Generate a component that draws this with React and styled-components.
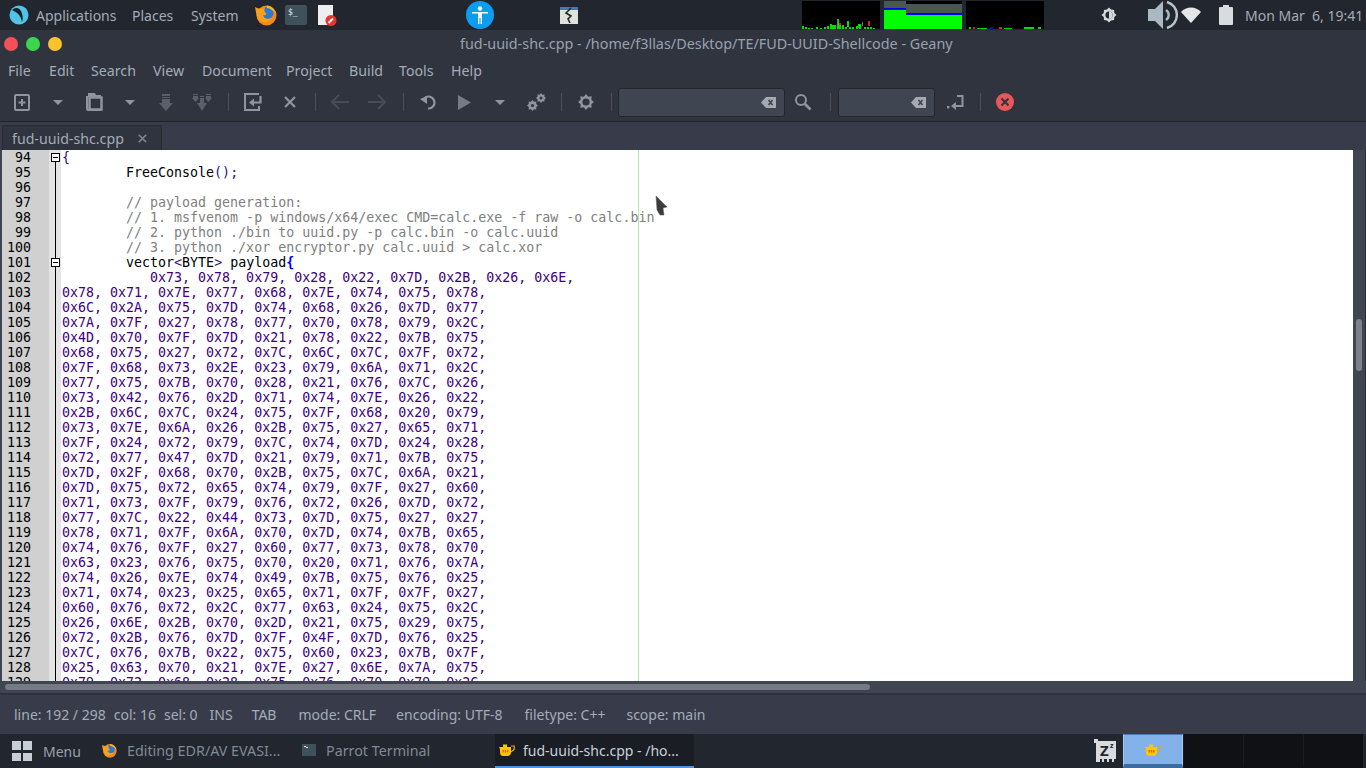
import React from "react";
import styled, { createGlobalStyle } from "styled-components";

const uiFont = `"Noto Sans", "Open Sans", sans-serif`;
const monoFont = `"DejaVu Sans Mono", "Liberation Mono", monospace`;

const payload = [
  "0x73, 0x78, 0x79, 0x28, 0x22, 0x7D, 0x2B, 0x26, 0x6E,",
  "0x78, 0x71, 0x7E, 0x77, 0x68, 0x7E, 0x74, 0x75, 0x78,",
  "0x6C, 0x2A, 0x75, 0x7D, 0x74, 0x68, 0x26, 0x7D, 0x77,",
  "0x7A, 0x7F, 0x27, 0x78, 0x77, 0x70, 0x78, 0x79, 0x2C,",
  "0x4D, 0x70, 0x7F, 0x7D, 0x21, 0x78, 0x22, 0x7B, 0x75,",
  "0x68, 0x75, 0x27, 0x72, 0x7C, 0x6C, 0x7C, 0x7F, 0x72,",
  "0x7F, 0x68, 0x73, 0x2E, 0x23, 0x79, 0x6A, 0x71, 0x2C,",
  "0x77, 0x75, 0x7B, 0x70, 0x28, 0x21, 0x76, 0x7C, 0x26,",
  "0x73, 0x42, 0x76, 0x2D, 0x71, 0x74, 0x7E, 0x26, 0x22,",
  "0x2B, 0x6C, 0x7C, 0x24, 0x75, 0x7F, 0x68, 0x20, 0x79,",
  "0x73, 0x7E, 0x6A, 0x26, 0x2B, 0x75, 0x27, 0x65, 0x71,",
  "0x7F, 0x24, 0x72, 0x79, 0x7C, 0x74, 0x7D, 0x24, 0x28,",
  "0x72, 0x77, 0x47, 0x7D, 0x21, 0x79, 0x71, 0x7B, 0x75,",
  "0x7D, 0x2F, 0x68, 0x70, 0x2B, 0x75, 0x7C, 0x6A, 0x21,",
  "0x7D, 0x75, 0x72, 0x65, 0x74, 0x79, 0x7F, 0x27, 0x60,",
  "0x71, 0x73, 0x7F, 0x79, 0x76, 0x72, 0x26, 0x7D, 0x72,",
  "0x77, 0x7C, 0x22, 0x44, 0x73, 0x7D, 0x75, 0x27, 0x27,",
  "0x78, 0x71, 0x7F, 0x6A, 0x70, 0x7D, 0x74, 0x7B, 0x65,",
  "0x74, 0x76, 0x7F, 0x27, 0x60, 0x77, 0x73, 0x78, 0x70,",
  "0x63, 0x23, 0x76, 0x75, 0x70, 0x20, 0x71, 0x76, 0x7A,",
  "0x74, 0x26, 0x7E, 0x74, 0x49, 0x7B, 0x75, 0x76, 0x25,",
  "0x71, 0x74, 0x23, 0x25, 0x65, 0x71, 0x7F, 0x7F, 0x27,",
  "0x60, 0x76, 0x72, 0x2C, 0x77, 0x63, 0x24, 0x75, 0x2C,",
  "0x26, 0x6E, 0x2B, 0x70, 0x2D, 0x21, 0x75, 0x29, 0x75,",
  "0x72, 0x2B, 0x76, 0x7D, 0x7F, 0x4F, 0x7D, 0x76, 0x25,",
  "0x7C, 0x76, 0x7B, 0x22, 0x75, 0x60, 0x23, 0x7B, 0x7F,",
  "0x25, 0x63, 0x70, 0x21, 0x7E, 0x27, 0x6E, 0x7A, 0x75,",
  "0x79, 0x72, 0x68, 0x28, 0x75, 0x76, 0x70, 0x79, 0x2C,",
];

const GlobalStyle = createGlobalStyle`
  html, body {
    margin: 0;
    padding: 0;
    width: 1366px;
    height: 768px;
    overflow: hidden;
    background: #2f343f;
    font-family: ${uiFont};
  }
`;

const Screen = styled.div`
  width: 1366px;
  height: 768px;
  display: flex;
  flex-direction: column;
  position: relative;
  overflow: hidden;
`;

const TopPanel = styled.div`
  height: 30px;
  flex: none;
  display: flex;
  align-items: center;
  background: #22262e;
  color: #a3acb8;
  font-size: 14px;
`;

const PanelSlot = styled.div`
  flex: none;
  display: flex;
  align-items: center;
  justify-content: center;
  width: ${(p) => p.$w}px;
  margin-left: ${(p) => p.$ml || 0}px;
`;

const PanelLabel = styled.span`
  flex: none;
  width: ${(p) => p.$w}px;
  white-space: nowrap;
`;

const Clock = styled.span`
  margin-left: 12px;
  white-space: pre;
  font-size: 14px;
  color: #a3acb8;
`;

const TitleBar = styled.div`
  height: 27px;
  flex: none;
  display: flex;
  align-items: center;
  position: relative;
  background: #2f343f;
  padding-left: 4px;
  gap: 8px;
`;

const Dot = styled.span`
  width: 14px;
  height: 14px;
  border-radius: 50%;
  background: ${(p) => p.$c};
`;

const Title = styled.div`
  flex: 1;
  margin-left: 390px;
  font-size: 14.38px;
  color: #98a2af;
  white-space: nowrap;
`;

const MenuBar = styled.div`
  height: 27px;
  flex: none;
  display: flex;
  align-items: center;
  background: #2f343f;
  color: #a3acb8;
  font-size: 14.2px;
  padding-left: 8px;
`;

const MenuItem = styled.span`
  flex: none;
  width: ${(p) => p.$w}px;
`;

const Toolbar = styled.div`
  height: 38px;
  flex: none;
  box-sizing: border-box;
  display: flex;
  align-items: center;
  background: #2f343f;
  border-bottom: 1px solid #1f2228;
  padding: 0 0 1px 4px;
`;

const ToolBtn = styled.div`
  width: ${(p) => p.$w || 36}px;
  height: 36px;
  flex: none;
  display: flex;
  align-items: center;
  justify-content: center;
`;

const ToolSep = styled.div`
  width: 1px;
  height: 18px;
  flex: none;
  background: #4b505c;
  margin: 0 ${(p) => p.$m}px 0 ${(p) => p.$ml}px;
`;

const SearchEntry = styled.div`
  width: ${(p) => p.$w}px;
  height: 29px;
  flex: none;
  box-sizing: border-box;
  display: flex;
  align-items: center;
  justify-content: flex-end;
  padding-right: 8px;
  background: #404552;
  border: 1px solid #23262d;
  border-radius: 3px;
`;

const TabBar = styled.div`
  height: 28px;
  flex: none;
  display: flex;
  align-items: flex-end;
  background: #383c4a;
  padding-left: 2px;
`;

const Tab = styled.div`
  width: 160px;
  height: 25px;
  box-sizing: border-box;
  display: flex;
  align-items: center;
  padding-left: 9px;
  gap: 14px;
  background: #2f343f;
  border: 1px solid #262a32;
  border-bottom: none;
  border-radius: 2px 2px 0 0;
  color: #a3acb8;
  font-size: 14.2px;
`;

const EditorRow = styled.div`
  height: 531px;
  flex: none;
  display: flex;
  background: #404552;
`;

const Editor = styled.div`
  flex: 1;
  position: relative;
  overflow: hidden;
  margin-left: 2px;
  background: #fff;
  font-family: ${monoFont};
  font-size: 13.3px;
`;

const Ruler = styled.div`
  position: absolute;
  left: 636px;
  top: 0;
  bottom: 0;
  width: 1px;
  background: #b8e8b0;
`;

const CodeRow = styled.div`
  height: 15px;
  line-height: 15px;
  display: flex;
`;

const LineNo = styled.div`
  width: 47px;
  flex: none;
  box-sizing: border-box;
  padding-right: 18px;
  text-align: right;
  background: #d0d0d0;
  color: #000;
`;

const FoldCell = styled.div`
  width: 12px;
  flex: none;
  position: relative;
  background: #e4e4e4;

  &::before {
    content: "";
    position: absolute;
    left: 6px;
    top: ${(p) => (p.$head ? 7 : 0)}px;
    bottom: 0;
    width: 1px;
    background: #000;
  }
`;

const FoldBox = styled.div`
  position: absolute;
  left: 2px;
  top: 3px;
  width: 9px;
  height: 9px;
  box-sizing: border-box;
  background: #fff;
  border: 1px solid #000;

  &::after {
    content: "";
    position: absolute;
    left: 1px;
    right: 1px;
    top: 3px;
    height: 1px;
    background: #000;
  }
`;

const CodeText = styled.div`
  padding-left: 1px;
  white-space: pre;
  color: #000;
`;

const Comment = styled.span`
  color: #808080;
`;

const Op = styled.span`
  color: #301080;
`;

const Brace = styled.span`
  color: ${(p) => (p.$hot ? "#0000ff" : "#301080")};
  font-weight: ${(p) => (p.$hot ? 700 : 400)};
`;

const Hex = styled.span`
  color: #400080;
`;

const VScroll = styled.div`
  width: 13px;
  flex: none;
  position: relative;
  background: #404552;
  border-right: 1px solid #2b2e38;
  box-sizing: border-box;
`;

const VThumb = styled.div`
  position: absolute;
  left: 3px;
  top: 169px;
  width: 6px;
  height: 52px;
  border-radius: 3px;
  background: #7d818c;
`;

const HScroll = styled.div`
  height: 14px;
  flex: none;
  box-sizing: border-box;
  padding: 3px 0 0 5px;
  background: #404552;
  border-bottom: 2px solid #2f323c;
`;

const HThumb = styled.div`
  width: 865px;
  height: 6px;
  border-radius: 3px;
  background: #767a85;
`;

const StatusBar = styled.div`
  height: 39px;
  flex: none;
  display: flex;
  align-items: center;
  background: #383c4a;
  color: #a3acb8;
  font-size: 14px;
  padding-left: 14px;
`;

const StatusItem = styled.span`
  margin-left: ${(p) => p.$ml || 0}px;
  white-space: nowrap;
`;

const Taskbar = styled.div`
  flex: 1;
  display: flex;
  align-items: stretch;
  background: #22262e;
  color: #7f8a96;
  font-size: 14px;
`;

const MenuButton = styled.div`
  display: flex;
  align-items: center;
  padding-left: 12px;
  gap: 11px;
  width: 102px;
  box-sizing: border-box;
  flex: none;
  color: #98a2af;
`;

const Task = styled.div`
  flex: none;
  width: ${(p) => p.$w}px;
  box-sizing: border-box;
  display: flex;
  align-items: center;
  gap: ${(p) => p.$gap || 8}px;
  padding-left: ${(p) => p.$pl || 0}px;
  white-space: nowrap;
  font-size: ${(p) => (p.$active ? 14 : 14.3)}px;
  color: ${(p) => (p.$active ? "#c8d0da" : "#7f8a96")};
  background: ${(p) => (p.$active ? "#1a1d24" : "transparent")};
  border-bottom: 2px solid ${(p) => (p.$active ? "#5294e2" : "transparent")};
`;

const SleepSlot = styled.div`
  flex: none;
  width: 33px;
  box-sizing: border-box;
  padding-right: 3px;
  margin-left: 396px;
  display: flex;
  align-items: center;
  justify-content: center;
`;

const Workspace = styled.div`
  flex: none;
  width: 60px;
  box-sizing: border-box;
  display: flex;
  align-items: center;
  justify-content: center;
  background: ${(p) => (p.$active ? "#83b1ea" : "#0f1115")};
  border-top: 1px solid ${(p) => (p.$active ? "#4a79b0" : "#0f1115")};
  border-left: 1px solid ${(p) => (p.$active ? "#a8c8f0" : "#1a1c21")};
  border-right: 1px solid ${(p) => (p.$active ? "#a8c8f0" : "#0f1115")};
  border-bottom: 4px solid ${(p) => (p.$active ? "#3d6c9e" : "#0f1115")};
`;

const Pointer = styled.svg`
  position: absolute;
  left: 655px;
  top: 195px;
`;

const Glyph = ({ w = 18, h = 18, children, vb }) => (
  <svg width={w} height={h} viewBox={vb || `0 0 ${w} ${h}`}>
    {children}
  </svg>
);

const iconGray = "#8f949e";
const iconDim = "#5a5f6b";

const ParrotLogo = () => (
  <Glyph w={20} h={20}>
    <circle cx="10" cy="10" r="9.5" fill="#4fc3e8" />
    <path d="M3 5 C7 1 12 3 13 9 C14 12 14 14 13 17 C12 12 10 8 3 5Z" fill="#14202c" />
  </Glyph>
);

const FirefoxIcon = ({ size = 22 }) => (
  <Glyph w={size} h={size} vb="0 0 22 22">
    <circle cx="11.5" cy="11.5" r="10" fill="#f08a1d" />
    <circle cx="12.5" cy="9" r="6" fill="#2f78d0" />
    <path d="M0 3 C1 7 1 12 4 16 C8 20 14 19 17 14 C13 16 9 15 8 11 C11 12 12 10 11 9 C9 8 9 6 10 4 C7 5 3 5 0 3Z" fill="#f7a11e" />
    <path d="M12 1.5 C16 2 20 5 21.5 10 C18 6 15 4.5 12 4Z" fill="#f6b52a" />
  </Glyph>
);

const TerminalIcon = () => (
  <Glyph w={22} h={20}>
    <rect width="22" height="20" rx="2" fill="#3f515b" />
    <text x="3" y="10" fontFamily={monoFont} fontSize="8" fill="#e8eef0">$_</text>
  </Glyph>
);

const NoteIcon = () => (
  <Glyph w={19} h={21}>
    <rect width="15" height="20" fill="#eeeeee" />
    <circle cx="13" cy="15.5" r="5.5" fill="#e8342e" />
    <path d="M10.5 18 L15 13.5" stroke="#fff" strokeWidth="2" />
  </Glyph>
);

const AccessIcon = () => (
  <Glyph w={28} h={28}>
    <circle cx="14" cy="14" r="14" fill="#0d9df0" />
    <circle cx="14" cy="7.5" r="2.2" fill="#fff" />
    <path d="M6 11 H22 V12.5 H16 V23 H14.6 V17 H13.4 V23 H12 V12.5 H6Z" fill="#fff" />
  </Glyph>
);

const CrashIcon = () => (
  <Glyph w={18} h={17}>
    <rect width="18" height="17" fill="#dfe3dc" />
    <rect width="18" height="3" fill="#3f78c0" />
    <path d="M11 1 L6 6 L11 9 L8 12 L10 16" fill="none" stroke="#23282e" strokeWidth="1.6" />
  </Glyph>
);

const spikes = [
  [0, 3], [3, 2], [6, 1], [9, 1], [14, 2], [18, 1], [22, 2], [25, 3], [28, 5], [30, 4], [32, 4], [35, 10],
  [37, 5], [40, 4], [43, 2], [47, 2], [50, 2], [54, 3], [57, 2], [62, 2], [65, 2], [68, 2],
  [71, 1],
];

const CpuGraph = () => (
  <Glyph w={78} h={28}>
    <rect width="78" height="28" fill="#000" />
    {spikes.map(([x, h]) => (
      <rect key={x} x={x} y={28 - h} width="2" height={h} fill="#00e000" />
    ))}
    <rect x="35" y="18" width="1" height="5" fill="#777" />
    <rect x="37" y="22" width="2" height="2" fill="#d02020" />
    <rect x="60" y="21" width="1" height="4" fill="#777" />
    <rect x="66" y="20" width="2" height="5" fill="#d02020" />
    <rect x="45" y="20" width="2" height="6" fill="#00e000" />
    <rect x="56" y="23" width="3" height="4" fill="#00e000" />
  </Glyph>
);

const MemGraph = () => (
  <Glyph w={78} h={28}>
    <rect width="78" height="28" fill="#000" />
    <rect y="0" width="22" height="7" fill="#4a5650" />
    <rect y="7" width="22" height="2" fill="#0000ff" />
    <rect y="9" width="22" height="19" fill="#00ff00" />
    <rect x="22" y="3" width="56" height="9" fill="#4a5650" />
    <rect x="22" y="12" width="56" height="2" fill="#0000ff" />
    <rect x="22" y="14" width="56" height="14" fill="#00ff00" />
  </Glyph>
);

const NetGraph = () => (
  <Glyph w={78} h={28}>
    <rect width="78" height="28" fill="#000" />
    <rect x="3" y="26" width="2" height="2" fill="#00e000" />
    <rect x="7" y="26" width="2" height="2" fill="#e02020" />
    <rect x="11" y="27" width="10" height="1" fill="#00e000" />
    <rect x="24" y="26" width="3" height="2" fill="#0000ff" />
    <rect x="33" y="26" width="3" height="2" fill="#e02020" />
    <rect x="38" y="27" width="8" height="1" fill="#00e000" />
    <rect x="58" y="26" width="10" height="2" fill="#00e000" />
    <rect x="72" y="26" width="3" height="2" fill="#00e000" />
  </Glyph>
);

const BrightnessIcon = () => (
  <Glyph w={16} h={16}>
    <path d="M8 0.5 L10 2.6 L13 2.9 L13.3 5.9 L15.5 8 L13.3 10.1 L13 13.1 L10 13.4 L8 15.5 L6 13.4 L3 13.1 L2.7 10.1 L0.5 8 L2.7 5.9 L3 2.9 L6 2.6Z" fill="#d6d9dc" />
    <circle cx="8" cy="8" r="3.6" fill="#22262e" />
    <path d="M8 4.4 A3.6 3.6 0 0 1 8 11.6Z" fill="#d6d9dc" />
  </Glyph>
);

const SpeakerIcon = () => (
  <Glyph w={30} h={30}>
    <path d="M0 9 H7 L15 1 V29 L7 21 H0Z" fill="#a9b8c2" />
    <path d="M18 10 A6 6 0 0 1 18 20" fill="none" stroke="#a9b8c2" strokeWidth="2.4" />
    <path d="M19 2 A13.5 13.5 0 0 1 19 28" fill="none" stroke="#b9c4cc" strokeWidth="2.4" />
  </Glyph>
);

const WifiIcon = () => (
  <Glyph w={20} h={16}>
    <path d="M0 5 C5 -1 15 -1 20 5 L10 16Z" fill="#e4e6e8" />
  </Glyph>
);

const BatteryIcon = () => (
  <Glyph w={14} h={20}>
    <rect x="4" y="0" width="6" height="2" fill="#d9dcdf" />
    <rect x="0" y="2" width="14" height="18" rx="1" fill="#d9dcdf" />
  </Glyph>
);

const NewIcon = () => (
  <Glyph w={16} h={17}>
    <rect x="1" y="1" width="14" height="15" rx="1" fill="none" stroke={iconGray} strokeWidth="2" />
    <path d="M8 5 V12 M4.5 8.5 H11.5" stroke={iconGray} strokeWidth="2" />
  </Glyph>
);

const DropArrow = () => (
  <Glyph w={10} h={5}>
    <path d="M0 0 H10 L5 5Z" fill={iconGray} />
  </Glyph>
);

const OpenIcon = () => (
  <Glyph w={17} h={18}>
    <path d="M2 0 H9 L10 2 H15 V4 H2Z" fill={iconGray} />
    <path d="M0 3 H2 V16 H15 V18 H2 Q0 18 0 16Z" fill={iconGray} />
    <rect x="3.5" y="4.5" width="12" height="12" fill="none" stroke={iconGray} strokeWidth="2.5" />
  </Glyph>
);

const SaveIcon = () => (
  <Glyph w={14} h={17}>
    <path d="M3 0 H11 V2 H3Z M3 3 H11 V4 H3Z M3 5 H11 V9 H14 L7 17 L0 9 H3Z" fill={iconDim} />
  </Glyph>
);

const SaveAllIcon = () => (
  <Glyph w={20} h={17}>
    <path d="M1 0 H6 V1 H1Z M14 0 H19 V1 H14Z M1 2 H6 V4 H7 L3.5 8 L0 4 H1Z M14 2 H19 V4 H20 L16.5 8 L13 4 H14Z" fill={iconDim} />
    <path d="M8 2 H12 V3 H8Z M8 4 H12 V9 H15 L10 17 L5 9 H8Z" fill={iconDim} />
  </Glyph>
);

const ReloadIcon = () => (
  <Glyph w={18} h={18}>
    <path d="M15 1 H1 V17 H15 V13" fill="none" stroke={iconGray} strokeWidth="2" />
    <path d="M16.5 3 V9.5 H9" fill="none" stroke={iconGray} strokeWidth="2.2" />
    <path d="M10 5.5 L5 9.5 L10 13.5Z" fill={iconGray} />
  </Glyph>
);

const CloseIcon = ({ size = 12, c = iconGray }) => (
  <Glyph w={size} h={size} vb="0 0 12 12">
    <path d="M1 1 L11 11 M11 1 L1 11" stroke={c} strokeWidth="2.2" />
  </Glyph>
);

const BackIcon = ({ flip }) => (
  <Glyph w={18} h={16}>
    <g transform={flip ? "matrix(-1 0 0 1 18 0)" : undefined}>
      <path d="M8 1 L1 8 L8 15 M1 8 H18" fill="none" stroke="#474c58" strokeWidth="2.2" />
    </g>
  </Glyph>
);

const UndoIcon = () => (
  <Glyph w={16} h={16}>
    <path d="M4.5 4 A6 6 0 1 1 8 14.5" fill="none" stroke={iconGray} strokeWidth="2.2" />
    <path d="M0 5 L7 2 L7 10Z" fill={iconGray} />
  </Glyph>
);

const PlayIcon = () => (
  <Glyph w={13} h={15}>
    <path d="M0 0 L13 7.5 L0 15Z" fill="#767b86" />
  </Glyph>
);

const gearPath = (cx, cy, r) => {
  const pts = [];
  for (let i = 0; i < 16; i++) {
    const a = (i * Math.PI) / 8;
    const rad = i % 2 === 0 ? r : r * 0.72;
    pts.push(`${(cx + rad * Math.cos(a)).toFixed(2)},${(cy + rad * Math.sin(a)).toFixed(2)}`);
  }
  return pts.join(" ");
};

const GearsIcon = () => (
  <Glyph w={19} h={18}>
    <polygon points={gearPath(5.5, 12.5, 5.5)} fill={iconGray} />
    <circle cx="5.5" cy="12.5" r="1.6" fill="#2f343f" />
    <polygon points={gearPath(14, 5, 5)} fill={iconGray} />
    <circle cx="14" cy="5" r="1.5" fill="#2f343f" />
  </Glyph>
);

const GearIcon = () => (
  <Glyph w={16} h={16}>
    <polygon points={gearPath(8, 8, 8)} fill={iconGray} />
    <circle cx="8" cy="8" r="3.6" fill="#2f343f" />
  </Glyph>
);

const ClearIcon = () => (
  <Glyph w={15} h={11}>
    <path d="M5 0 H15 V11 H5 L0 5.5Z" fill="#a5a9b1" />
    <path d="M7.5 3 L11.5 8 M11.5 3 L7.5 8" stroke="#404552" strokeWidth="1.6" />
  </Glyph>
);

const SearchIcon = () => (
  <Glyph w={18} h={18}>
    <circle cx="7" cy="7" r="5" fill="none" stroke={iconGray} strokeWidth="2" />
    <path d="M10.5 10.5 L16.5 16.5" stroke={iconGray} strokeWidth="2.6" />
  </Glyph>
);

const JumpIcon = () => (
  <Glyph w={17} h={15}>
    <rect x="0" y="11" width="2.4" height="2.4" fill={iconGray} />
    <path d="M10 1 H15.5 V11 H7" fill="none" stroke={iconGray} strokeWidth="2" />
    <path d="M9 7 L4 11 L9 15Z" fill={iconGray} />
  </Glyph>
);

const QuitIcon = () => (
  <svg width="18" height="18" viewBox="0 0 18 18">
    <circle cx="9" cy="9" r="9" fill="#e95858" />
    <path d="M5.5 5.5 L12.5 12.5 M12.5 5.5 L5.5 12.5" stroke="#2f343f" strokeWidth="2" />
  </svg>
);

const GridIcon = () => (
  <Glyph w={20} h={20}>
    <rect x="0" y="0" width="9" height="9" fill="#c8ced6" />
    <rect x="11" y="0" width="9" height="9" fill="#c8ced6" />
    <rect x="0" y="12" width="9" height="8" fill="#c8ced6" />
    <rect x="11" y="12" width="9" height="8" fill="#c8ced6" />
  </Glyph>
);

const TinyTerminal = () => (
  <Glyph w={14} h={12}>
    <rect width="14" height="12" fill="#3f515b" />
    <rect x="2" y="2" width="2" height="1" fill="#dfe7ea" />
    <rect x="4" y="3" width="2" height="1" fill="#dfe7ea" />
  </Glyph>
);

const GeanyIcon = () => (
  <Glyph w={16} h={12}>
    <path d="M0 3 H12 V8 Q12 12 8 12 H4 Q1 12 1 8 V5Z" fill="#fbc800" />
    <rect x="4" y="0.5" width="4" height="2.5" fill="#fbc800" />
    <path d="M12 2 H15.2 V5.5 L12 8" fill="none" stroke="#d8ad20" strokeWidth="1.2" />
    <rect x="3.5" y="6" width="1.4" height="2.5" fill="#e8601a" />
    <rect x="5.8" y="6" width="1.4" height="2.5" fill="#e8601a" />
    <rect x="8.1" y="6" width="1.4" height="2.5" fill="#e8601a" />
  </Glyph>
);

const SleepIcon = () => (
  <Glyph w={24} h={24}>
    <path d="M1 0 H5 V2 H23 V20 H21 V23 H19 V20 H16 V23 H14 V20 H11 V23 H9 V20 H7 V23 H3 V4 H1Z" fill="#d8dcdf" />
    <text x="7" y="17" fontFamily={uiFont} fontSize="15" fontWeight="700" fill="#22262e">Z</text>
    <text x="17" y="9" fontFamily={uiFont} fontSize="7" fontWeight="700" fill="#22262e">z</text>
  </Glyph>
);

const MouseCursor = () => (
  <Pointer width="13" height="22" viewBox="0 0 13 22">
    <path d="M1 1 L12 12 L8 13 L9 20 L5 20 L2 15 Z" fill="#3c3c3c" stroke="#5a5a5a" strokeWidth="0.5" />
  </Pointer>
);

const codeLines = [
  { n: 94, fold: "head", body: <Brace>{"{"}</Brace> },
  { n: 95, body: <>{"        FreeConsole"}<Op>()</Op><Op>;</Op></> },
  { n: 96, body: "" },
  { n: 97, body: <Comment>{"        // payload generation:"}</Comment> },
  { n: 98, body: <Comment>{"        // 1. msfvenom -p windows/x64/exec CMD=calc.exe -f raw -o calc.bin"}</Comment> },
  { n: 99, body: <Comment>{"        // 2. python ./bin to uuid.py -p calc.bin -o calc.uuid"}</Comment> },
  { n: 100, body: <Comment>{"        // 3. python ./xor encryptor.py calc.uuid > calc.xor"}</Comment> },
  { n: 101, fold: "box", body: <>{"        vector"}<Op>{"<"}</Op>BYTE<Op>{">"}</Op>{" payload"}<Brace $hot>{"{"}</Brace></> },
  ...payload.map((row, i) => ({
    n: 102 + i,
    body: <Hex>{i === 0 ? `           ${row}` : row}</Hex>,
  })),
];

const menuItems = [
  ["File", 41],
  ["Edit", 42],
  ["Search", 62],
  ["View", 49],
  ["Document", 84],
  ["Project", 63],
  ["Build", 50],
  ["Tools", 52],
  ["Help", 40],
];

export default function App() {
  return (
    <Screen>
      <GlobalStyle />
      <TopPanel>
        <PanelSlot $w={20} $ml={9}><ParrotLogo /></PanelSlot>
        <PanelSlot $w={7} />
        <PanelLabel $w={96}>Applications</PanelLabel>
        <PanelLabel $w={59}>Places</PanelLabel>
        <PanelLabel $w={64}>System</PanelLabel>
        <PanelSlot $w={22}><FirefoxIcon /></PanelSlot>
        <PanelSlot $w={22} $ml={8}><TerminalIcon /></PanelSlot>
        <PanelSlot $w={19} $ml={11}><NoteIcon /></PanelSlot>
        <PanelSlot $w={28} $ml={129}><AccessIcon /></PanelSlot>
        <PanelSlot $w={18} $ml={66}><CrashIcon /></PanelSlot>
        <PanelSlot $w={78} $ml={224}><CpuGraph /></PanelSlot>
        <PanelSlot $w={78} $ml={4}><MemGraph /></PanelSlot>
        <PanelSlot $w={78} $ml={4}><NetGraph /></PanelSlot>
        <PanelSlot $w={16} $ml={57}><BrightnessIcon /></PanelSlot>
        <PanelSlot $w={30} $ml={31}><SpeakerIcon /></PanelSlot>
        <PanelSlot $w={20} $ml={3}><WifiIcon /></PanelSlot>
        <PanelSlot $w={14} $ml={18}><BatteryIcon /></PanelSlot>
        <Clock>{"Mon Mar  6, 19:41"}</Clock>
      </TopPanel>

      <TitleBar>
        <Dot $c="#f5505a" />
        <Dot $c="#3ad64e" />
        <Dot $c="#fcc22e" />
        <Title>fud-uuid-shc.cpp - /home/f3llas/Desktop/TE/FUD-UUID-Shellcode - Geany</Title>
      </TitleBar>

      <MenuBar>
        {menuItems.map(([item, w]) => (
          <MenuItem key={item} $w={w}>{item}</MenuItem>
        ))}
      </MenuBar>

      <Toolbar>
        <ToolBtn><NewIcon /></ToolBtn>
        <ToolBtn><DropArrow /></ToolBtn>
        <ToolBtn><OpenIcon /></ToolBtn>
        <ToolBtn><DropArrow /></ToolBtn>
        <ToolBtn><SaveIcon /></ToolBtn>
        <ToolBtn><SaveAllIcon /></ToolBtn>
        <ToolSep $ml={8} $m={6} />
        <ToolBtn><ReloadIcon /></ToolBtn>
        <ToolBtn $w={38}><CloseIcon /></ToolBtn>
        <ToolSep $ml={6} $m={6} />
        <ToolBtn><BackIcon /></ToolBtn>
        <ToolBtn $w={38}><BackIcon flip /></ToolBtn>
        <ToolSep $ml={7} $m={6} />
        <ToolBtn><UndoIcon /></ToolBtn>
        <ToolBtn><PlayIcon /></ToolBtn>
        <ToolBtn><DropArrow /></ToolBtn>
        <ToolBtn><GearsIcon /></ToolBtn>
        <ToolSep $ml={7} $m={6} />
        <ToolBtn><GearIcon /></ToolBtn>
        <ToolSep $ml={7} $m={6} />
        <SearchEntry $w={167}><ClearIcon /></SearchEntry>
        <ToolBtn><SearchIcon /></ToolBtn>
        <ToolSep $ml={9} $m={7} />
        <SearchEntry $w={97}><ClearIcon /></SearchEntry>
        <ToolBtn $w={40}><JumpIcon /></ToolBtn>
        <ToolSep $ml={5} $m={6} />
        <ToolBtn><QuitIcon /></ToolBtn>
      </Toolbar>

      <TabBar>
        <Tab>
          fud-uuid-shc.cpp
          <CloseIcon size={9} c="#7f8590" />
        </Tab>
      </TabBar>

      <EditorRow>
        <Editor>
          {codeLines.map((line) => (
            <CodeRow key={line.n}>
              <LineNo>{line.n}</LineNo>
              <FoldCell $head={line.fold === "head"}>
                {line.fold && <FoldBox />}
              </FoldCell>
              <CodeText>{line.body}</CodeText>
            </CodeRow>
          ))}
          <Ruler />
        </Editor>
        <VScroll>
          <VThumb />
        </VScroll>
      </EditorRow>

      <HScroll>
        <HThumb />
      </HScroll>

      <StatusBar>
        <StatusItem>line: 192 / 298</StatusItem>
        <StatusItem $ml={8}>col: 16</StatusItem>
        <StatusItem $ml={8}>sel: 0</StatusItem>
        <StatusItem $ml={12}>INS</StatusItem>
        <StatusItem $ml={19}>TAB</StatusItem>
        <StatusItem $ml={22}>mode: CRLF</StatusItem>
        <StatusItem $ml={20}>encoding: UTF-8</StatusItem>
        <StatusItem $ml={22}>filetype: C++</StatusItem>
        <StatusItem $ml={21}>scope: main</StatusItem>
      </StatusBar>

      <Taskbar>
        <MenuButton><GridIcon />Menu</MenuButton>
        <Task $w={197} $gap={10}><FirefoxIcon size={15} />Editing EDR/AV EVASI...</Task>
        <Task $w={196} $gap={10} $pl={3}><TinyTerminal />Parrot Terminal</Task>
        <Task $w={199} $active $pl={4}><GeanyIcon />fud-uuid-shc.cpp - /ho...</Task>
        <SleepSlot><SleepIcon /></SleepSlot>
        <Workspace $active><GeanyIcon /></Workspace>
        <Workspace />
        <Workspace />
        <Workspace />
      </Taskbar>

      <MouseCursor />
    </Screen>
  );
}
